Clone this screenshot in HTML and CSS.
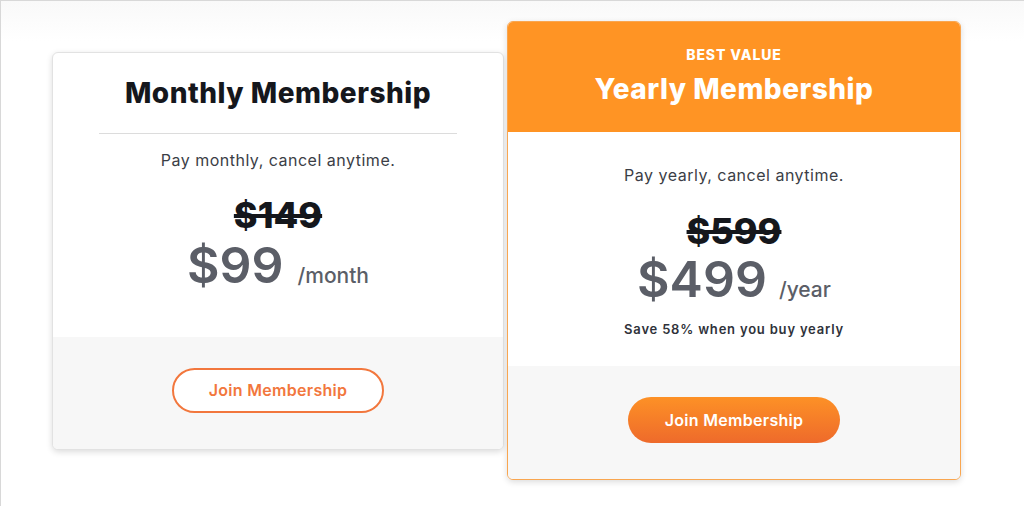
FILE: index.html
```html
<!DOCTYPE html>
<html lang="en">

<head>
    <meta charset="UTF-8">
    <meta name="viewport" content="width=device-width, initial-scale=1.0">
    <title>Membership</title>
    <link rel="stylesheet" href="styles.css">
</head>

<body>
    <div class="page">
        <div class="plans">
            <!-- monthly plan -->
            <div class="plan">
                <div class="plan-body">
                    <h2 class="plan-title">Monthly Membership</h2>
                    <hr class="divider">
                    <p class="plan-desc">Pay monthly, cancel anytime.</p>
                    <div class="old-price">$149</div>
                    <div class="price">$99 <span class="period">/month</span></div>
                </div>
                <div class="plan-footer">
                    <button class="btn btn-outline">Join Membership</button>
                </div>
            </div>

            <!-- yearly plan -->
            <div class="plan plan-featured">
                <div class="plan-head">
                    <div class="badge">BEST VALUE</div>
                    <h2 class="plan-title">Yearly Membership</h2>
                </div>
                <div class="plan-body">
                    <p class="plan-desc">Pay yearly, cancel anytime.</p>
                    <div class="old-price">$599</div>
                    <div class="price">$499 <span class="period">/year</span></div>
                    <p class="save">Save 58% when you buy yearly</p>
                </div>
                <div class="plan-footer">
                    <button class="btn btn-solid">Join Membership</button>
                </div>
            </div>
        </div>
    </div>
</body>

</html>
```

FILE: styles.css
```css
html,
body {
    margin: 0;
    height: 100%;
}

body {
    font-family: Inter, "Noto Sans", sans-serif;
    background-color: #fff;
    color: #1a1c22;
}

.page {
    box-sizing: border-box;
    height: 100%;
    border-top: 1px solid #d8d8d8;
    border-left: 1px solid #d8d8d8;
    background: linear-gradient(#f9f9f9, #fff 40px);
}

.plans {
    display: flex;
    align-items: center;
    gap: 3px;
    padding: 20px 0 0 51px;
}

.plan {
    box-sizing: border-box;
    width: 452px;
    background-color: #fff;
    border: 1px solid #e2e2e2;
    border-radius: 6px;
    box-shadow: 0 2px 6px rgba(0, 0, 0, 0.14);
    overflow: hidden;
    text-align: center;
}

.plan-body {
    padding: 22px 46px 44px;
}

.plan-title {
    margin: 0;
    font-size: 28px;
    line-height: 36px;
    font-weight: 800;
    letter-spacing: 0.5px;
    color: #15171c;
}

.divider {
    margin: 22px 0 16px;
    border: none;
    border-top: 1px solid #dcdcdc;
}

.plan-desc {
    margin: 0;
    font-size: 16px;
    line-height: 20px;
    color: #3b3e46;
    letter-spacing: 0.5px;
}

.old-price {
    margin-top: 25px;
    font-size: 36px;
    line-height: 40px;
    font-weight: 800;
    color: #15171c;
    text-decoration: line-through;
    text-decoration-thickness: 4px;
}

.price {
    display: flex;
    justify-content: center;
    align-items: baseline;
    gap: 14px;
    margin-top: 2px;
    font-size: 50px;
    line-height: 56px;
    font-weight: 600;
    color: #5b5e67;
}

.period {
    font-size: 21px;
    line-height: 24px;
    font-weight: 500;
}

.plan-footer {
    padding: 31px 0 36px;
    background-color: #f7f7f7;
}

.btn {
    width: 212px;
    height: 45px;
    border-radius: 23px;
    font-family: inherit;
    font-size: 16px;
    font-weight: 600;
    letter-spacing: 0.3px;
    cursor: pointer;
}

.btn-outline {
    border: 2px solid #f2773d;
    background-color: #fff;
    color: #f2773d;
}

/* featured yearly plan */
.plan-featured {
    width: 454px;
    border-color: #f9a650;
}

.plan-featured .plan-head {
    padding: 25px 20px 25px;
    background-color: #ff9424;
    color: #fff;
}

.badge {
    font-size: 14px;
    line-height: 16px;
    font-weight: 800;
    letter-spacing: 0.9px;
}

.plan-featured .plan-title {
    margin-top: 8px;
    color: #fff;
}

.plan-featured .plan-body {
    padding: 33px 46px 28px;
}

.plan-featured .old-price {
    margin-top: 26px;
}

.plan-featured .price {
    margin-top: 0;
    gap: 12px;
}

.save {
    margin: 13px 0 0;
    font-size: 13px;
    line-height: 18px;
    font-weight: 600;
    color: #2f323a;
    letter-spacing: 0.8px;
}

.btn-solid {
    height: 46px;
    border: none;
    background: linear-gradient(#fd9126, #ee6a2b);
    color: #fff;
}
```
